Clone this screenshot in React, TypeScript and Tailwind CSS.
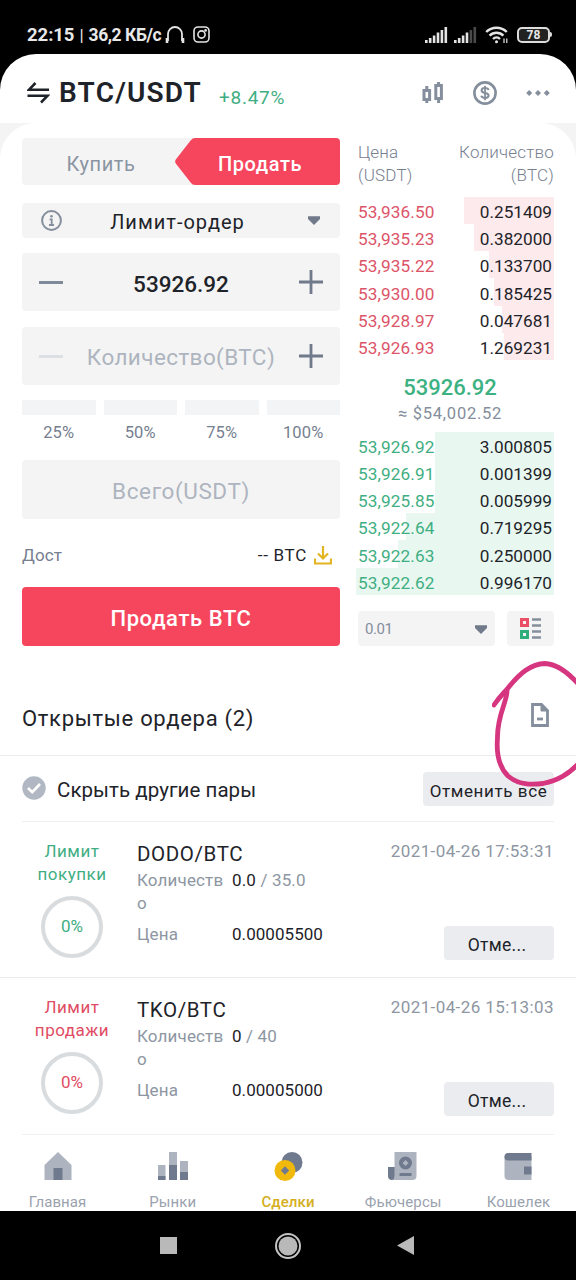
import React from 'react';

const ASKS = [
  { price: '53,936.50', amount: '0.251409', depth: 45.5 },
  { price: '53,935.23', amount: '0.382000', depth: 40.5 },
  { price: '53,935.22', amount: '0.133700', depth: 33 },
  { price: '53,930.00', amount: '0.185425', depth: 30.5 },
  { price: '53,928.97', amount: '0.047681', depth: 26.5 },
  { price: '53,926.93', amount: '1.269231', depth: 25 },
];

const BIDS = [
  { price: '53,926.92', amount: '3.000805', depth: 60 },
  { price: '53,926.91', amount: '0.001399', depth: 60 },
  { price: '53,925.85', amount: '0.005999', depth: 60 },
  { price: '53,922.64', amount: '0.719295', depth: 75 },
  { price: '53,922.63', amount: '0.250000', depth: 79 },
  { price: '53,922.62', amount: '0.996170', depth: 100 },
];

const ORDERS = [
  {
    side: 'buy',
    type: ['Лимит', 'покупки'],
    pair: 'DODO/BTC',
    filled: '0.0',
    total: '/ 35.0',
    price: '0.00005500',
    date: '2021-04-26 17:53:31',
  },
  {
    side: 'sell',
    type: ['Лимит', 'продажи'],
    pair: 'TKO/BTC',
    filled: '0',
    total: '/ 40',
    price: '0.00005000',
    date: '2021-04-26 15:13:03',
  },
];

function Signal({ dim = 0 }: { dim?: number }) {
  return (
    <svg width="23" height="16" viewBox="0 0 23 16">
      {[3, 5, 7.5, 10.5, 13, 16].map((h, i) => (
        <rect
          key={h}
          x={i * 3.9}
          y={16 - h}
          width="2.6"
          height={h}
          fill={i >= 6 - dim ? '#4a4a4a' : '#e4e4e4'}
        />
      ))}
    </svg>
  );
}

function StatusBar() {
  return (
    <div className="flex h-[54px] items-center bg-black pt-[15px] pr-6 pl-[27px] text-[#e8e8e8]">
      <span className="text-[18.5px] leading-5 font-bold tracking-[-0.05px]">22:15</span>
      <span className="ml-[5px] text-[17px] leading-5">|</span>
      <span className="ml-[5px] text-[17.5px] leading-5 font-bold tracking-[-0.45px]">36,2 КБ/с</span>
      <svg className="ml-[4px]" width="20" height="18" viewBox="0 0 20 18" fill="none" stroke="#e4e4e4" strokeWidth="1.8">
        <path d="M3 15 V8 a7 7 0 0 1 14 0 V15" />
        <path d="M2 12 v5 M18 12 v5" strokeWidth="2.6" />
      </svg>
      <svg className="ml-2" width="17" height="17" viewBox="0 0 17 17" fill="none" stroke="#e4e4e4" strokeWidth="1.6">
        <rect x="1" y="1" width="15" height="15" rx="4" />
        <circle cx="8.5" cy="8.5" r="3.6" />
        <circle cx="12.6" cy="4.4" r="0.6" />
      </svg>
      <div className="ml-auto flex items-center">
        <Signal />
        <div className="w-[6px]" />
        <Signal dim={2} />
        <svg className="ml-2" width="24" height="18" viewBox="0 0 24 18" fill="none" stroke="#e4e4e4" strokeWidth="2.4">
          <path d="M1.2 6 A14.5 14.5 0 0 1 21.8 6" />
          <path d="M4.6 9.6 A9.7 9.7 0 0 1 18.4 9.6" />
          <path d="M8 13 A5 5 0 0 1 15 13" />
          <circle cx="11.5" cy="15.8" r="1.5" fill="#e4e4e4" stroke="none" />
          <path d="M19 12.5 V17 M21.8 12.5 V17" strokeWidth="1.2" />
        </svg>
        <div className="ml-2 flex h-4 w-[33px] items-center justify-center rounded-[5px] border-2 border-[#dcdcdc] bg-[#222] text-[12px] leading-3 font-bold">
          78
        </div>
        <div className="h-[5px] w-[2px] rounded-r bg-[#dcdcdc]" />
      </div>
    </div>
  );
}

function Header() {
  return (
    <div className="bg-black">
      <header className="flex h-[69px] items-center rounded-t-[36px] bg-white pt-[9px] pr-[26px] pl-[27px]">
        <svg width="23" height="22" viewBox="0 0 23 22" fill="none" stroke="#1e2329" strokeWidth="2.6">
          <path d="M8.5 1 L2 7.7 H22" />
          <path d="M0.5 13.8 H20.5 L14 20.5" />
        </svg>
        <h1 className="ml-[9px] text-[28px] leading-8 font-semibold tracking-[1.2px] text-[#1e2329]">BTC/USDT</h1>
        <span className="mt-[9px] ml-[17px] text-[19px] leading-6 font-[450] tracking-[0.75px] text-[#3fae82]">+8.47%</span>
        <svg className="ml-auto" width="24" height="22" viewBox="0 0 24 22" fill="none" stroke="#848e9c" strokeWidth="3">
          <rect x="3" y="8.5" width="5.6" height="9" />
          <path d="M5.8 4 V8 M5.8 18 V21" />
          <rect x="14.8" y="3.5" width="5.6" height="13" />
          <path d="M17.6 0 V3 M17.6 17 V21" />
        </svg>
        <svg className="-mt-px ml-7" width="24" height="24" viewBox="0 0 24 24" fill="none" stroke="#848e9c" strokeWidth="2.6">
          <circle cx="12" cy="12" r="10.600" />
          <path d="M15.6 9 C15.2 7.6 13.8 7.1 12 7.1 C9.9 7.1 8.6 8 8.6 9.5 C8.6 13 15.6 11 15.6 14.5 C15.6 16 14.1 16.9 12 16.9 C10 16.9 8.6 16.2 8.2 14.8" strokeWidth="2" />
          <path d="M12 4.8 V19.2" strokeWidth="1.8" />
        </svg>
        <svg className="-mt-px ml-[29px]" width="24" height="6" viewBox="0 0 24 6" fill="#848e9c">
          <path d="M3.2 0 L6.2 3 L3.2 6 L0.2 3 Z" />
          <path d="M12 0 L15 3 L12 6 L9 3 Z" />
          <path d="M20.8 0 L23.8 3 L20.8 6 L17.8 3 Z" />
        </svg>
      </header>
    </div>
  );
}

function Caret() {
  return (
    <svg width="12" height="9" viewBox="0 0 12 9" fill="#707a8a">
      <path d="M0 0.3 H12 V3 L6 9 L0 3 Z" />
    </svg>
  );
}

function Minus({ faded = false }: { faded?: boolean }) {
  return <div className={`h-[3px] w-6 ${faded ? 'bg-[#dcdfe4]' : 'bg-[#7e899a]'}`} />;
}

function Plus() {
  return (
    <svg width="24" height="24" viewBox="0 0 24 24" stroke="#707a8a" strokeWidth="2.8">
      <path d="M0 12 H24 M12 0 V24" />
    </svg>
  );
}

function OrderForm() {
  return (
    <div className="flex w-[318px] flex-col">
      <div className="flex h-[47px] rounded bg-[#f4f4f4]">
        <div className="flex flex-1 items-center justify-center pt-1 pl-[5px] text-[20px] font-[450] tracking-[0.6px] text-[#8a94a2]">
          Купить
        </div>
        <div className="relative flex w-[165px] items-center justify-center pt-1 pl-[5px] text-[20px] font-medium tracking-[0.6px] text-white">
          <svg className="absolute inset-0" width="165" height="47" viewBox="0 0 165 47" fill="#f6465d">
            <path d="M20 0 H161 a4 4 0 0 1 4 4 V43 a4 4 0 0 1 -4 4 H20 Q17.5 47 16 45 L0.8 25.5 Q-0.5 23.5 0.8 21.5 L16 2 Q17.5 0 20 0 Z" />
          </svg>
          <span className="relative">Продать</span>
        </div>
      </div>

      <div className="mt-[18px] flex h-[35px] items-center justify-between rounded bg-[#f4f4f4] pr-5 pl-[19px]">
        <svg width="21" height="21" viewBox="0 0 21 21" fill="none" stroke="#848e9c" strokeWidth="2">
          <circle cx="10.5" cy="10.5" r="9.4" />
          <path d="M8.6 9.3 H10.7 V15 M8 15 H13" strokeWidth="1.8" />
          <circle cx="10.5" cy="6.2" r="1.3" fill="#848e9c" stroke="none" />
        </svg>
        <span className="mr-[15px] pt-[3px] text-[20px] leading-6 font-[450] tracking-[1px] text-[#1e2329]">Лимит-ордер</span>
        <Caret />
      </div>

      <div className="mt-[15px] flex h-[58px] items-center justify-between rounded bg-[#f4f4f4] px-[17px]">
        <Minus />
        <span className="pt-[5px] text-[22.5px] font-medium text-[#1e2329]">53926.92</span>
        <Plus />
      </div>

      <div className="mt-4 flex h-[58px] items-center justify-between rounded bg-[#f4f4f4] px-[17px]">
        <Minus faded />
        <span className="pt-1 text-[22.5px] tracking-[0.4px] text-[#aeb4bf]">Количество(BTC)</span>
        <Plus />
      </div>

      <div className="mt-[15px] grid grid-cols-4 gap-2">
        {['25%', '50%', '75%', '100%'].map((p) => (
          <div key={p} className="flex flex-col items-center">
            <div className="h-[15px] w-full bg-[#f3f4f5]" />
            <span className="mt-[8px] text-[16.5px] leading-5 tracking-[0.2px] text-[#76808f]">{p}</span>
          </div>
        ))}
      </div>

      <div className="mt-[17px] flex h-[59px] items-center justify-center rounded bg-[#f4f4f4] pt-1 text-[22.5px] tracking-[0.6px] text-[#aeb4bf]">
        Всего(USDT)
      </div>

      <div className="mt-[26px] flex h-5 items-center pt-px text-[17px]">
        <span className="tracking-[0.1px] text-[#76808f]">Дост</span>
        <span className="ml-auto tracking-[0.7px] text-[#1e2329]">-- BTC</span>
        <svg className="mr-2 ml-[7px]" width="18" height="19" viewBox="0 0 18 19" fill="none" stroke="#e3b523" strokeWidth="2.2">
          <path d="M9 0 V12.5 M4 7.5 L9 12.5 L14 7.5" />
          <path d="M1 12.5 V17.5 H17 V12.5" />
        </svg>
      </div>

      <button className="mt-[22px] h-[59px] rounded bg-[#f6465d] pt-[4px] text-[22px] font-medium tracking-[0.6px] text-white">
        Продать BTC
      </button>
    </div>
  );
}

type Level = { price: string; amount: string; depth: number };

function BookSide({ rows, kind }: { rows: Level[]; kind: 'ask' | 'bid' }) {
  const bar = kind === 'ask' ? '#fdeaec' : '#e8f8f0';
  return (
    <div className="-ml-[2px]">
      {rows.map((row) => (
        <div
          key={row.price}
          className="flex h-[27.15px] items-center justify-between pt-[5px] pr-[2px] pl-[2px] text-[17.2px]"
          style={{ background: `linear-gradient(to left, ${bar} ${row.depth}%, transparent ${row.depth}%)` }}
        >
          <span className={kind === 'ask' ? 'tracking-[0.1px] text-[#dc5468]' : 'tracking-[0.1px] text-[#3fae82]'}>{row.price}</span>
          <span className="text-[#1e2329]">{row.amount}</span>
        </div>
      ))}
    </div>
  );
}

function OrderBook() {
  return (
    <div className="flex w-[196px] flex-col">
      <div className="mt-[3px] flex justify-between text-[17px] leading-[23px] font-[350] tracking-[0.2px] text-[#76808f]">
        <span>
          Цена
          <br />
          (USDT)
        </span>
        <span className="text-right">
          Количество
          <br />
          (BTC)
        </span>
      </div>
      <div className="mt-[10px]">
        <BookSide rows={ASKS} kind="ask" />
      </div>
      <div className="flex h-[72px] flex-col items-center pt-[15px] pr-3">
        <span className="text-[22px] leading-[26px] font-medium text-[#3cb182]">53926.92</span>
        <span className="mt-[1px] text-[16.5px] leading-6 tracking-[0.75px] text-[#848e9c]">≈ $54,002.52</span>
      </div>
      <BookSide rows={BIDS} kind="bid" />
      <div className="mt-4 flex h-[35px] gap-3">
        <div className="flex flex-1 items-center justify-between rounded bg-[#f4f4f4] pt-0.5 pr-2 pl-[7px] text-[15px] tracking-[-0.4px] text-[#848e9c]">
          0.01
          <Caret />
        </div>
        <div className="flex w-[47px] items-center justify-center rounded bg-[#f4f4f4]">
          <svg width="21" height="21" viewBox="0 0 21 21" fill="none">
            <rect x="1.5" y="1.5" width="6" height="6" stroke="#ea4f65" strokeWidth="3" />
            <rect x="1.5" y="13.5" width="6" height="6" stroke="#2fae7c" strokeWidth="3" />
            <path d="M12 1.5 H21 M12 7.5 H21 M12 13.5 H21 M12 19.5 H21" stroke="#848e9c" strokeWidth="2.6" />
          </svg>
        </div>
      </div>
    </div>
  );
}

function OpenOrdersHeader() {
  return (
    <>
      <div className="relative flex h-[110px] items-center justify-between border-b border-[#e9ebed] pt-[36px] pr-[27px] pl-[22px]">
        <h2 className="text-[22px] font-[450] tracking-[0.7px] text-[#1e2329]">Открытые ордера (2)</h2>
        <svg className="-mt-[8px]" width="18" height="24" viewBox="0 0 18 24" fill="none" stroke="#848e9c" strokeWidth="2.8">
          <path d="M1.5 1.5 H10.5 L16.5 7.5 V22.5 H1.5 Z" />
          <path d="M10 1 V8 H17 Z" fill="#848e9c" strokeWidth="1" />
          <path d="M6 16 H12" />
        </svg>
        {/* hand-drawn marker loop around the history icon */}
        <svg className="absolute top-[14px] right-0 z-10" width="84" height="130" viewBox="492 660 84 130" fill="none" stroke="#d6357f" strokeWidth="4.8" strokeLinecap="round" strokeLinejoin="round">
          <path d="M494 705 C500 696 504 693 508 688 C520 673 531 664 545 663.5 C557 664 568 672 580 686" />
          <path d="M507 690 C508 700 497 715 497.5 738 C496 756 500 768 508 776 C519 785 531 785 543 783.500 C558 780 568 775 580 762" />
        </svg>
      </div>
      <div className="mx-[22px] flex h-[66px] items-center border-b border-[#eef0f2]">
        <svg className="-mt-[2px]" width="24" height="24" viewBox="0 0 24 24" fill="none">
          <circle cx="12" cy="12" r="11.700" fill="#b1b8c4" />
          <path d="M6 12 L10.3 16.2 L18 8" stroke="white" strokeWidth="2.6" />
        </svg>
        <span className="ml-[11px] pt-[4px] text-[20.5px] tracking-[0.05px] text-[#1e2329]">Скрыть другие пары</span>
        <button className="ml-auto h-[34px] w-[131px] rounded bg-[#eaecef] pt-[4px] text-[17px] leading-6 font-[450] tracking-[0.6px] text-[#1e2329]">
          Отменить все
        </button>
      </div>
    </>
  );
}

function OrderRow({ order }: { order: (typeof ORDERS)[number] }) {
  const color = order.side === 'buy' ? 'text-[#3fae82]' : 'text-[#e04d63]';
  return (
    <div className="flex h-[156px] px-[22px]">
      <div className={`flex w-[100px] flex-col items-center pt-[18px] ${color}`}>
        <div className="text-center text-[17px] leading-[23px] font-[450] tracking-[0.5px]">
          {order.type[0]}
          <br />
          {order.type[1]}
        </div>
        <div className="mt-[10px] flex h-[62px] w-[62px] items-center justify-center rounded-full border-4 border-[#d9dcdf] text-[17px]">
          0%
        </div>
      </div>
      <div className="flex flex-1 flex-col pt-[19px] pl-[15px]">
        <div className="flex h-[26px] items-center justify-between">
          <span className="text-[20.5px] font-[450] tracking-[0.6px] text-[#1e2329]">{order.pair}</span>
          <span className="-mt-[5px] text-[17px] tracking-[0.4px] text-[#8d96a2]">{order.date}</span>
        </div>
        <div className="flex flex-1">
          <div className="mt-[2px] grid grid-cols-[95px_auto] content-start text-[17px] leading-[23px] tracking-[0.15px]">
            <span className="w-[90px] text-[#8d96a2]">
              Количеств
              <br />о
            </span>
            <span className="text-[#8d96a2]">
              <span className="font-[450] text-[#1e2329]">{order.filled}</span> {order.total}
            </span>
            <span className="mt-[8px] text-[#8d96a2]">Цена</span>
            <span className="mt-[8px] font-[450] tracking-[0.05px] text-[#1e2329]">{order.price}</span>
          </div>
          <button className="mt-[59px] ml-auto h-[34px] w-[110px] rounded bg-[#eaecef] pt-[3px] pr-1 text-[17.5px] leading-6 font-[450] tracking-[0.3px] text-[#1e2329]">
            Отме...
          </button>
        </div>
      </div>
    </div>
  );
}

const TABS = [
  {
    label: 'Главная',
    icon: (
      <>
        <path d="M14 0 L27.5 13 V28 H0.5 V13 Z" fill="#aeb4bf" />
        <rect x="9.5" y="16" width="9" height="12" fill="#707a8e" />
      </>
    ),
  },
  {
    label: 'Рынки',
    icon: (
      <>
        <path d="M-1 13 h7.5 v15 h-7.5 Z M10 0 h8 v28 h-8 Z M21 9 h8 v19 h-8 Z" fill="#aeb4bf" />
        <path d="M-1 24 h7.5 v4 h-7.5 Z M10 13 h8 v15 h-8 Z M21 20 h8 v8 h-8 Z" fill="#707a8e" />
      </>
    ),
  },
  {
    label: 'Сделки',
    active: true,
    icon: (
      <>
        <circle cx="18" cy="10.5" r="10.5" fill="#707a8e" />
        <circle cx="11" cy="18.5" r="10.5" fill="#f0b90b" />
        <path d="M11 14.3 L15.2 18.5 L11 22.7 L6.8 18.5 Z" fill="#707a8e" />
      </>
    ),
  },
  {
    label: 'Фьючерсы',
    icon: (
      <>
        <path d="M-1 15 H6 V28 H3 Q-1 28 -1 24 Z" fill="#707a8e" />
        <path d="M5.5 0 H27.5 V24 Q27.5 28 23.5 28 H3 Q5.5 27 5.5 24 Z" fill="#aeb4bf" />
        <circle cx="16.5" cy="11" r="6.5" fill="#707a8e" />
        <path d="M16.5 8 L19.5 11 L16.5 14 L13.5 11 Z" fill="#aeb4bf" />
        <rect x="10.5" y="21" width="12" height="3" fill="#707a8e" />
      </>
    ),
  },
  {
    label: 'Кошелек',
    icon: (
      <>
        <path d="M0.5 4 H27.5 V28 H4.5 Q0.5 28 0.5 24 Z" fill="#aeb4bf" />
        <path d="M4 1 H27.5 V8.5 H4 Q0.5 8.5 0.5 4.7 Q0.5 1 4 1 Z" fill="#707a8e" />
        <rect x="20" y="14.500" width="7.5" height="8" fill="#707a8e" />
      </>
    ),
  },
];

function TabBar() {
  return (
    <nav className="grid h-[76px] grid-cols-5 overflow-hidden">
      {TABS.map((tab) => (
        <div key={tab.label} className="flex flex-col items-center pt-[17px]">
          <svg className="overflow-visible" width="28" height="28" viewBox="0 0 28 28">
            {tab.icon}
          </svg>
          <span className={`mt-3 text-[15px] leading-5 ${tab.active ? 'font-medium tracking-[0.1px] text-[#d5ae22]' : 'tracking-[0.1px] text-[#9aa2ae]'}`}>
            {tab.label}
          </span>
        </div>
      ))}
    </nav>
  );
}

export default function App() {
  return (
    <div className="h-[1280px] w-[576px] overflow-hidden bg-white font-[Roboto,'Noto_Sans',sans-serif]">
      <StatusBar />
      <Header />
      <div className="bg-[#f4f4f4]">
        <div className="flex h-[523px] gap-[18px] rounded-t-[36px] bg-white px-[22px] pt-[15px]">
          <OrderForm />
          <OrderBook />
        </div>
      </div>
      <OpenOrdersHeader />
      <OrderRow order={ORDERS[0]} />
      <div className="-mt-px h-px bg-[#e9ebed]" />
      <OrderRow order={ORDERS[1]} />
      <div className="mx-[22px] h-px bg-[#eef0f2]" />
      <TabBar />
      <div className="flex h-[69px] items-center bg-black pl-40">
        <div className="h-[17px] w-[17px] bg-[#b9b9b9]" />
        <svg className="ml-[98px]" width="26" height="26" viewBox="0 0 26 26">
          <circle cx="13" cy="13" r="12" fill="none" stroke="#c4c4c4" strokeWidth="2" />
          <circle cx="13" cy="13" r="9.5" fill="#b9b9b9" />
        </svg>
        <svg className="ml-24" width="17" height="19" viewBox="0 0 17 19" fill="#b9b9b9">
          <path d="M17 0 V19 L0 9.5 Z" />
        </svg>
      </div>
    </div>
  );
}
